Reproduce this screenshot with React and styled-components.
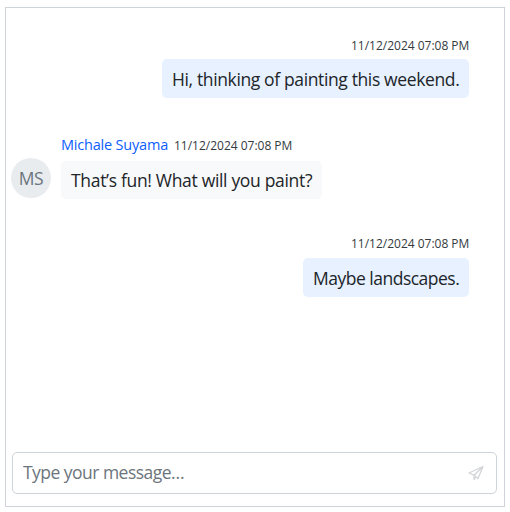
import React from "react";
import styled, { createGlobalStyle } from "styled-components";

const GlobalStyle = createGlobalStyle`
  *, *::before, *::after { box-sizing: border-box; }
  body {
    margin: 0;
    background: #fff;
    font-family: "Open Sans", "Noto Sans", sans-serif;
    color: #212529;
  }
`;

const Chat = styled.main`
  display: flex;
  flex-direction: column;
  width: 500px;
  height: 500px;
  margin: 7px 0 0 5px;
  border: 1px solid #ced4da;
  background: #fff;
`;

const Messages = styled.div`
  flex: 1;
  display: flex;
  flex-direction: column;
  padding: 28px 35px 0 5px;
`;

const Message = styled.article`
  display: flex;
  align-items: flex-end;
  justify-content: ${(p) => (p.$own ? "flex-end" : "flex-start")};
  gap: 10px;
  height: ${(p) => (p.$own ? 62 : 63)}px;
  margin-bottom: ${(p) => (p.$own ? 38 : 36)}px;
`;

const Content = styled.div`
  display: flex;
  flex-direction: column;
  height: 100%;
  align-items: ${(p) => (p.$own ? "flex-end" : "flex-start")};
`;

const Header = styled.div`
  display: flex;
  align-items: baseline;
  height: ${(p) => (p.$own ? 23 : 25)}px;
  line-height: ${(p) => p.$line}px;
  white-space: nowrap;
`;

const Author = styled.span`
  width: 107px;
  margin-right: 6px;
  color: #0d5efd;
  font-size: 14.5px;
  letter-spacing: -0.2px;
`;

const Time = styled.time`
  width: 118px;
  font-size: 12px;
  color: #343a40;
  letter-spacing: -0.01px;
`;

const Bubble = styled.div`
  width: ${(p) => p.$width}px;
  height: ${(p) => (p.$own ? 39 : 38)}px;
  padding-left: 10px;
  border-radius: 5px;
  background: ${(p) => (p.$own ? "#e7f1ff" : "#f8f9fa")};
  font-size: 17.5px;
  line-height: ${(p) => (p.$own ? 40 : 38)}px;
  letter-spacing: ${(p) => p.$tracking}px;
  white-space: nowrap;
`;

const Avatar = styled.div`
  flex: none;
  width: 40px;
  height: 40px;
  margin-bottom: 1px;
  border-radius: 50%;
  background: #e9ecef;
  color: #6c757d;
  font-size: 17.5px;
  line-height: 41px;
  letter-spacing: -0.5px;
  text-align: center;
`;

const Composer = styled.form`
  display: flex;
  align-items: center;
  height: 42px;
  margin: 0 7px 12px 6px;
  padding: 0 12px 0 10px;
  border: 1px solid #ced4da;
  border-radius: 5px;
`;

const MessageInput = styled.input`
  flex: 1;
  min-width: 0;
  height: 38px;
  padding: 0 0 2px;
  border: 0;
  outline: 0;
  background: transparent;
  font: inherit;
  font-size: 17.5px;
  letter-spacing: -0.53px;
  &::placeholder { color: #6c757d; opacity: 1; }
`;

const SendButton = styled.button`
  display: flex;
  padding: 0;
  border: 0;
  background: none;
  color: #d3d5d8;
`;

const messages = [
  { own: true, text: "Hi, thinking of painting this weekend.", width: 307, tracking: -0.37, line: 20 },
  { own: false, author: "Michale Suyama", initials: "MS", text: "That’s fun! What will you paint?", width: 261, tracking: -0.32, line: 18 },
  { own: true, text: "Maybe landscapes.", width: 166, tracking: -0.5, line: 18 },
];

export default function App() {
  return (
    <>
      <GlobalStyle />
      <Chat>
        <Messages>
          {messages.map((m) => (
            <Message key={m.text} $own={m.own}>
              {!m.own && <Avatar>{m.initials}</Avatar>}
              <Content $own={m.own}>
                <Header $own={m.own} $line={m.line}>
                  {!m.own && <Author>{m.author}</Author>}
                  <Time>11/12/2024 07:08 PM</Time>
                </Header>
                <Bubble $own={m.own} $width={m.width} $tracking={m.tracking}>{m.text}</Bubble>
              </Content>
            </Message>
          ))}
        </Messages>
        <Composer onSubmit={(e) => e.preventDefault()}>
          <MessageInput placeholder="Type your message…" />
          <SendButton type="submit" aria-label="Send">
            <svg width="16" height="16" viewBox="0 0 16 16" fill="none" stroke="currentColor" strokeWidth="1.3" strokeLinejoin="round">
              <path d="M15 1.5 1 8l5 2.2 4 3.3L15 1.5ZM15 1.5 6 10.2v4.3l2-2.4" />
            </svg>
          </SendButton>
        </Composer>
      </Chat>
    </>
  );
}
